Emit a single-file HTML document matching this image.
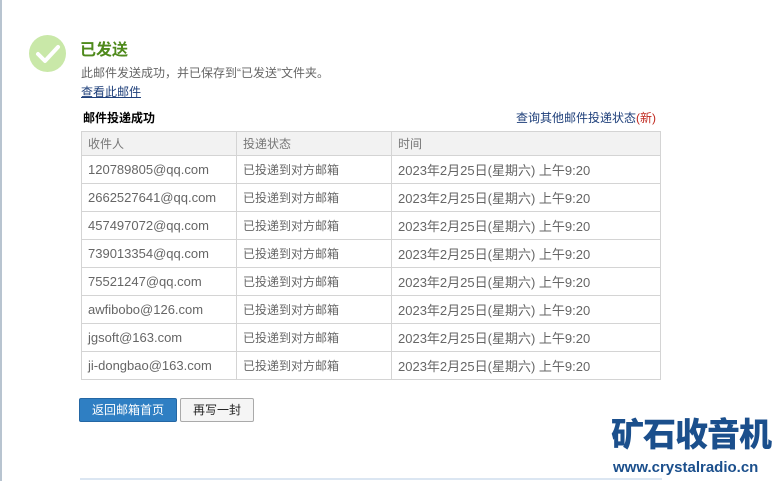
<!DOCTYPE html>
<html><head><meta charset="utf-8"><style>
*{margin:0;padding:0;box-sizing:border-box}
body{width:778px;height:481px;background:#fff;font-family:"Liberation Sans","Noto Sans CJK SC",sans-serif;font-size:12px;color:#333;position:relative;overflow:hidden}
.lb{position:absolute;left:0;top:0;width:2px;height:481px;background:#b8c4d0}
.ic{position:absolute;left:29px;top:35px;width:37px;height:37px;border-radius:50%;background:#c9e8a8}
.t{position:absolute;left:80px;top:36px;font-size:16px;font-weight:bold;color:#4f8a1c}
.d{position:absolute;left:81px;top:64px;color:#666}
.v{position:absolute;left:81px;top:83px;color:#1e3f7a;text-decoration:underline}
.h{position:absolute;left:83px;top:109px;font-weight:bold;color:#000}
.q{position:absolute;left:516px;top:109px;color:#1e3f7a}
.q span{color:#c0281e}
table{position:absolute;left:81px;top:131px;border-collapse:collapse;width:580px}
td{border:1px solid #d4d4d4;height:28px;padding-left:6px;color:#666;font-size:13px}
tr.hd td{background:#f2f2f2;height:24px;font-size:12px;color:#777}
td.c3{font-size:13px}
.b1{position:absolute;left:79px;top:398px;width:98px;height:24px;background:#2f7fc3;border:1px solid #2467a4;border-radius:2px;color:#fff;text-align:center;line-height:22px}
.b2{position:absolute;left:180px;top:398px;width:74px;height:24px;background:#f5f5f5;border:1px solid #aaa;border-radius:2px;color:#222;text-align:center;line-height:22px}
.lg{position:absolute;left:611px;top:415px;font-size:33px;font-weight:900;color:#1b4f8c;letter-spacing:-1px;line-height:40px}
.url{position:absolute;left:613px;top:459px;font-size:15px;font-weight:bold;color:#1b4f8c}
.bl{position:absolute;left:80px;top:478px;width:582px;height:2px;background:#dbe6f2}
</style></head><body>
<div class="lb"></div>
<div class="ic"><svg width="37" height="37" viewBox="0 0 37 37"><path d="M9 19 L16 26 L29 12" stroke="#fff" stroke-width="4" fill="none" stroke-linecap="round" stroke-linejoin="round"/></svg></div>
<div class="t">已发送</div>
<div class="d">此邮件发送成功，并已保存到“已发送”文件夹。</div>
<div class="v">查看此邮件</div>
<div class="h">邮件投递成功</div>
<div class="q">查询其他邮件投递状态<span>(新)</span></div>
<table>
<tr class="hd"><td style="width:155px">收件人</td><td style="width:155px">投递状态</td><td>时间</td></tr>
<tr><td>120789805@qq.com</td><td style="font-size:12px">已投递到对方邮箱</td><td>2023年2月25日(星期六) 上午9:20</td></tr>
<tr><td>2662527641@qq.com</td><td style="font-size:12px">已投递到对方邮箱</td><td>2023年2月25日(星期六) 上午9:20</td></tr>
<tr><td>457497072@qq.com</td><td style="font-size:12px">已投递到对方邮箱</td><td>2023年2月25日(星期六) 上午9:20</td></tr>
<tr><td>739013354@qq.com</td><td style="font-size:12px">已投递到对方邮箱</td><td>2023年2月25日(星期六) 上午9:20</td></tr>
<tr><td>75521247@qq.com</td><td style="font-size:12px">已投递到对方邮箱</td><td>2023年2月25日(星期六) 上午9:20</td></tr>
<tr><td>awfibobo@126.com</td><td style="font-size:12px">已投递到对方邮箱</td><td>2023年2月25日(星期六) 上午9:20</td></tr>
<tr><td>jgsoft@163.com</td><td style="font-size:12px">已投递到对方邮箱</td><td>2023年2月25日(星期六) 上午9:20</td></tr>
<tr><td>ji-dongbao@163.com</td><td style="font-size:12px">已投递到对方邮箱</td><td>2023年2月25日(星期六) 上午9:20</td></tr>
</table>
<div class="b1">返回邮箱首页</div>
<div class="b2">再写一封</div>
<div class="lg">矿石收音机</div>
<div class="url">www.crystalradio.cn</div>
<div class="bl"></div>
</body></html>
